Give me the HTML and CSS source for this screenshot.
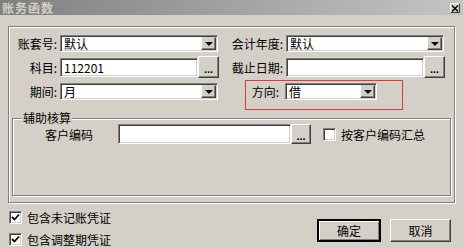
FILE: index.html
```html
<!DOCTYPE html>
<html lang="zh-CN">
<head>
    <meta charset="UTF-8">
    <title>账务函数</title>
    <link rel="stylesheet" href="styles.css">
</head>
<body>

    <div class="titlebar">
        <span class="title">账务函数</span>
        <span class="close">
            <svg width="8" height="7" viewBox="0 0 8 7"><path d="M1 0.5 L7 6.5 M7 0.5 L1 6.5" stroke="#000" stroke-width="1.4"/></svg>
        </span>
    </div>

    <div class="frame">
        <div class="form-grid">
            <label class="lbl">账套号:</label>
            <div class="combo"><span class="value">默认</span><span class="drop"><i class="arrow"></i></span></div>
            <label class="lbl">会计年度:</label>
            <div class="combo"><span class="value">默认</span><span class="drop"><i class="arrow"></i></span></div>

            <label class="lbl">科目:</label>
            <div class="picker"><div class="field">112201</div><span class="btn dots">...</span></div>
            <label class="lbl">截止日期:</label>
            <div class="picker"><div class="field"></div><span class="btn dots">...</span></div>

            <label class="lbl">期间:</label>
            <div class="combo"><span class="value">月</span><span class="drop"><i class="arrow"></i></span></div>
            <label class="lbl lbl-dir">方向:</label>
            <div class="combo combo-short"><span class="value">借</span><span class="drop"><i class="arrow"></i></span></div>
        </div>

        <div class="group">
            <span class="legend">辅助核算</span>
            <div class="group-row">
                <label class="lbl-cust">客户编码</label>
                <div class="field field-cust"></div>
                <span class="btn dots dots-cust">...</span>
                <span class="check"></span>
                <span class="check-text">按客户编码汇总</span>
            </div>
        </div>

        <!-- highlight drawn on top of the screenshot -->
        <div class="mark"></div>
    </div>

    <div class="footer">
        <div class="checks">
            <div class="check-row">
                <span class="check"><svg width="11" height="11" viewBox="0 0 11 11"><polyline points="2,5 4.5,7.5 9,2.5" fill="none" stroke="#000" stroke-width="1.8"/></svg></span>
                <span class="check-text">包含未记账凭证</span>
            </div>
            <div class="check-row">
                <span class="check"><svg width="11" height="11" viewBox="0 0 11 11"><polyline points="2,5 4.5,7.5 9,2.5" fill="none" stroke="#000" stroke-width="1.8"/></svg></span>
                <span class="check-text">包含调整期凭证</span>
            </div>
        </div>
        <div class="actions">
            <span class="btn push push-default">确定</span>
            <span class="btn push">取消</span>
        </div>
    </div>

</body>
</html>
```

FILE: styles.css
```css
body {
    margin: 0;
    width: 463px;
    height: 248px;
    overflow: hidden;
    background-color: #d4d0c8;
    font-family: "Noto Sans CJK SC", "Liberation Sans", sans-serif;
    font-size: 12px;
    color: #000;
}
.titlebar {
    height: 15px;
    display: flex;
    justify-content: space-between;
    align-items: flex-start;
    padding: 0 3px 0 2px;
    background: linear-gradient(to right, #808080, #c4c4c4);
}
.title {
    font-size: 12px;
    font-weight: bold;
    line-height: 15px;
    letter-spacing: 1px;
    color: #d4d0c8;
}
.close {
    width: 10px;
    height: 10px;
    margin-top: 3px;
    box-sizing: border-box;
    display: flex;
    align-items: center;
    justify-content: center;
    background-color: #d4d0c8;
    border: 1px solid;
    border-color: #fff #404040 #404040 #fff;
}
.frame {
    position: relative;
    box-sizing: border-box;
    width: 447px;
    height: 177px;
    margin: 11px 0 0 8px;
    border: 1px solid #808080;
    box-shadow: inset 1px 1px #fff, 1px 1px #fff;
}
.form-grid {
    display: grid;
    grid-template-columns: 51px 159px 67px 159px;
    grid-auto-rows: 24px;
    align-items: center;
    padding-top: 4px;
}
.lbl {
    text-align: right;
    padding-right: 3px;
    white-space: nowrap;
}
.lbl-dir {
    padding-right: 7px;
}
/* sunken edit / combo frame */
.combo, .field, .check {
    box-sizing: border-box;
    border: 1px solid;
    border-color: #808080 #fff #fff #808080;
    box-shadow: inset 1px 1px #404040, inset -1px -1px #d4d0c8;
    background-color: #fff;
}
.combo {
    width: 158px;
    height: 17px;
    padding: 1px;
    display: flex;
}
.combo-short {
    width: 92px;
    margin-left: -1px;
}
.value {
    flex: 1;
    padding-left: 2px;
    line-height: 13px;
    background-color: #fff;
}
.drop {
    width: 15px;
    box-sizing: border-box;
    display: flex;
    align-items: center;
    justify-content: center;
    background-color: #d4d0c8;
    border: 1px solid;
    border-color: #d4d0c8 #404040 #404040 #fff;
    box-shadow: inset -1px -1px #808080;
}
.arrow {
    width: 0;
    height: 0;
    border-left: 4px solid transparent;
    border-right: 4px solid transparent;
    border-top: 4px solid #000;
    margin-top: 1px;
}
.picker {
    display: flex;
    align-items: center;
}
.field {
    width: 139px;
    height: 19px;
    padding: 1px 3px;
    line-height: 16px;
}
.btn {
    box-sizing: border-box;
    display: flex;
    align-items: center;
    justify-content: center;
    background-color: #d4d0c8;
    border: 1px solid;
    border-color: #fff #404040 #404040 #fff;
    box-shadow: inset -1px -1px #808080;
}
.dots {
    width: 21px;
    height: 22px;
    font-weight: bold;
    font-family: "Liberation Sans", sans-serif;
    font-size: 11px;
    padding-top: 3px;
}
.group {
    position: relative;
    box-sizing: border-box;
    height: 78px;
    margin: 15px 3px 0 3px;
    padding-top: 5px;
    border: 1px solid #808080;
    box-shadow: inset 1px 1px #fff, 1px 1px #fff;
}
.legend {
    position: absolute;
    top: -8px;
    left: 9px;
    padding: 0 1px;
    line-height: 14px;
    background-color: #d4d0c8;
}
.group-row {
    display: flex;
    align-items: center;
    height: 20px;
}
.lbl-cust {
    width: 73px;
    margin-left: 32px;
}
.field-cust {
    width: 173px;
    height: 20px;
}
.dots-cust {
    width: 20px;
    height: 20px;
}
.check {
    width: 13px;
    height: 13px;
    flex: none;
    display: flex;
    align-items: center;
    justify-content: center;
}
.group-row .check {
    margin-left: 12px;
}
.check-text {
    margin-left: 5px;
    white-space: nowrap;
}
.mark {
    position: absolute;
    left: 236px;
    top: 53px;
    width: 158px;
    height: 30px;
    box-sizing: border-box;
    border: 1px solid #e0393e;
}
.footer {
    display: flex;
    justify-content: space-between;
    padding: 3px 12px 0 9px;
}
.check-row {
    display: flex;
    align-items: center;
    height: 22px;
}
.actions {
    display: flex;
    gap: 9px;
    margin-top: 13px;
}
.push {
    width: 61px;
    height: 23px;
}
.push-default {
    width: 64px;
    border-width: 2px;
    border-color: #000;
    box-shadow: inset 1px 1px #fff, inset -1px -1px #808080;
}
```
